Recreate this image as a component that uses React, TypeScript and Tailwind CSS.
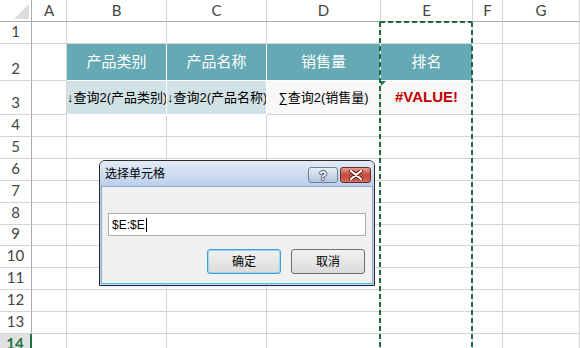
import React from "react";

const cols = ["A", "B", "C", "D", "E", "F", "G"];
const rows = Array.from({ length: 14 }, (_, i) => i + 1);

const head = "font-['Lato','Liberation_Sans',sans-serif] text-[15px] text-[#444]";
const cjk = "font-['Liberation_Sans','Noto_Sans_CJK_SC',sans-serif]";

function Cell({ r, c }: { r: number; c: number }) {
  const base = "relative border-r border-b border-[#d4d4d4] overflow-hidden";
  if (r === 2 && c >= 1 && c <= 4) {
    const labels = ["产品类别", "产品名称", "销售量", "排名"];
    return (
      <div className={`flex items-center justify-center border-r border-b border-white bg-[#64a9b3] text-[15px] text-white ${cjk}`}>
        {labels[c - 1]}
      </div>
    );
  }
  if (r === 3 && c >= 1 && c <= 4) {
    if (c === 4) {
      return (
        <div className="relative flex items-center justify-center border-r border-b border-[#d4d4d4] bg-[#f8f8f8] font-['Liberation_Sans',sans-serif] text-[15px] font-bold text-[#c00000]">
          #VALUE!
          <svg className="absolute left-0 top-0" width="5" height="5" viewBox="0 0 5 5">
            <polygon points="0,0 5,0 0,5" fill="#217346" />
          </svg>
        </div>
      );
    }
    const texts = ["↓查询2(产品类别)", "↓查询2(产品名称)", "∑查询2(销售量)"];
    return (
      <div
        className={`flex items-center overflow-hidden whitespace-nowrap border-r border-b text-[13px] text-black ${cjk} ${
          c === 3 ? "justify-center border-[#d4d4d4] bg-[#f8f8f8]" : "justify-start border-white bg-[#d1e2e6]"
        }`}
      >
        {texts[c - 1]}
      </div>
    );
  }
  return <div className={base} />;
}

export default function App() {
  return (
    <div className="relative h-[348px] w-[580px] overflow-hidden bg-white">
      <div className="grid grid-cols-[32px_35px_100px_100px_114px_92px_30px_1fr] grid-rows-[22px_22px_37px_34px_repeat(5,22px)_21px_repeat(5,22px)]">
        <div className="relative border-r border-b border-[#ababab]">
          <svg className="absolute left-0 top-0" width="31" height="21" viewBox="0 0 31 21">
            <polygon points="14,19 29,19 29,4" fill="#dcdcdc" />
          </svg>
        </div>
        {cols.map((c) => (
          <div key={c} className={`flex items-center justify-center border-r border-b border-r-[#d4d4d4] border-b-[#ababab] ${head}`}>
            {c}
          </div>
        ))}
        {rows.map((r) => (
          <React.Fragment key={r}>
            <div
              className={`flex items-end justify-center pb-[1px] border-b ${head} ${
                r === 14
                  ? "border-r-2 border-r-[#217346] border-b-[#d4d4d4] bg-[#e1e1e1] font-bold text-[#217346]"
                  : "border-r border-r-[#ababab] border-b-[#d4d4d4]"
              }`}
            >
              {r}
            </div>
            {cols.map((_, c) => (
              <Cell key={c} r={r} c={c} />
            ))}
          </React.Fragment>
        ))}
      </div>

      <svg className="pointer-events-none absolute left-[378px] top-[20px]" width="96" height="340" viewBox="0 0 96 340">
        <path d="M2 2 H94 M2 2 V340 M94 2 V340" stroke="#1d6b40" strokeWidth="2" strokeDasharray="5 3" fill="none" />
      </svg>

      <div className="absolute left-[99px] top-[160px] flex h-[126px] w-[276px] flex-col rounded-t-[6px] border border-[#2b2b2b] bg-[#bcd2ec]">
        <div className="flex h-[25px] items-center rounded-t-[5px] bg-gradient-to-b from-[#e2ebf7] to-[#bccfe9] pl-[5px] pr-[3px]">
          <span className={`text-[12px] text-black ${cjk}`}>选择单元格</span>
          <div className="ml-auto mt-[3px] flex gap-[2px]">
            <div className="flex h-[16px] w-[30px] items-center justify-center rounded-[3px] border border-[#6d7f99] bg-gradient-to-b from-[#e8eef6] to-[#b3c4da]">
              <span className="font-['Liberation_Sans',sans-serif] text-[13px] font-bold leading-none text-white [text-shadow:1px_0_#4a5668,-1px_0_#4a5668,0_1px_#4a5668,0_-1px_#4a5668]">
                ?
              </span>
            </div>
            <div className="flex h-[16px] w-[31px] items-center justify-center rounded-[3px] border border-[#6e2a24] bg-gradient-to-b from-[#e4a195] via-[#c4473b] to-[#d06a5b]">
              <svg width="14" height="10" viewBox="0 0 14 10">
                <path d="M2 1 L12 9 M12 1 L2 9" stroke="#5a1a14" strokeWidth="4" strokeLinecap="round" />
                <path d="M2 1 L12 9 M12 1 L2 9" stroke="#fff" strokeWidth="2.2" strokeLinecap="round" />
              </svg>
            </div>
          </div>
        </div>
        <div className="mx-[1px] mb-[1px] flex flex-1 flex-col border border-[#8fa9c8] border-b-[#4fc0e8] bg-[#f0f0f0] px-[6px] pt-[26px]">
          <div className={`flex h-[23px] items-center border border-[#abadb3] bg-white pl-[3px] text-[12px] text-black ${cjk}`}>
            $E:$E
            <span className="ml-[1px] h-[14px] w-[1px] bg-black" />
          </div>
          <div className={`mt-[13px] flex justify-end gap-[10px] pr-[1px] text-[12px] text-black ${cjk}`}>
            <div className="flex h-[25px] w-[74px] items-center justify-center rounded-[3px] border border-[#3c9ed9] bg-gradient-to-b from-[#f2f2f2] to-[#dadada] shadow-[inset_0_0_0_1px_#9fd6f3]">
              确定
            </div>
            <div className="flex h-[25px] w-[74px] items-center justify-center rounded-[3px] border border-[#707070] bg-gradient-to-b from-[#f2f2f2] to-[#dadada]">
              取消
            </div>
          </div>
        </div>
      </div>
    </div>
  );
}
